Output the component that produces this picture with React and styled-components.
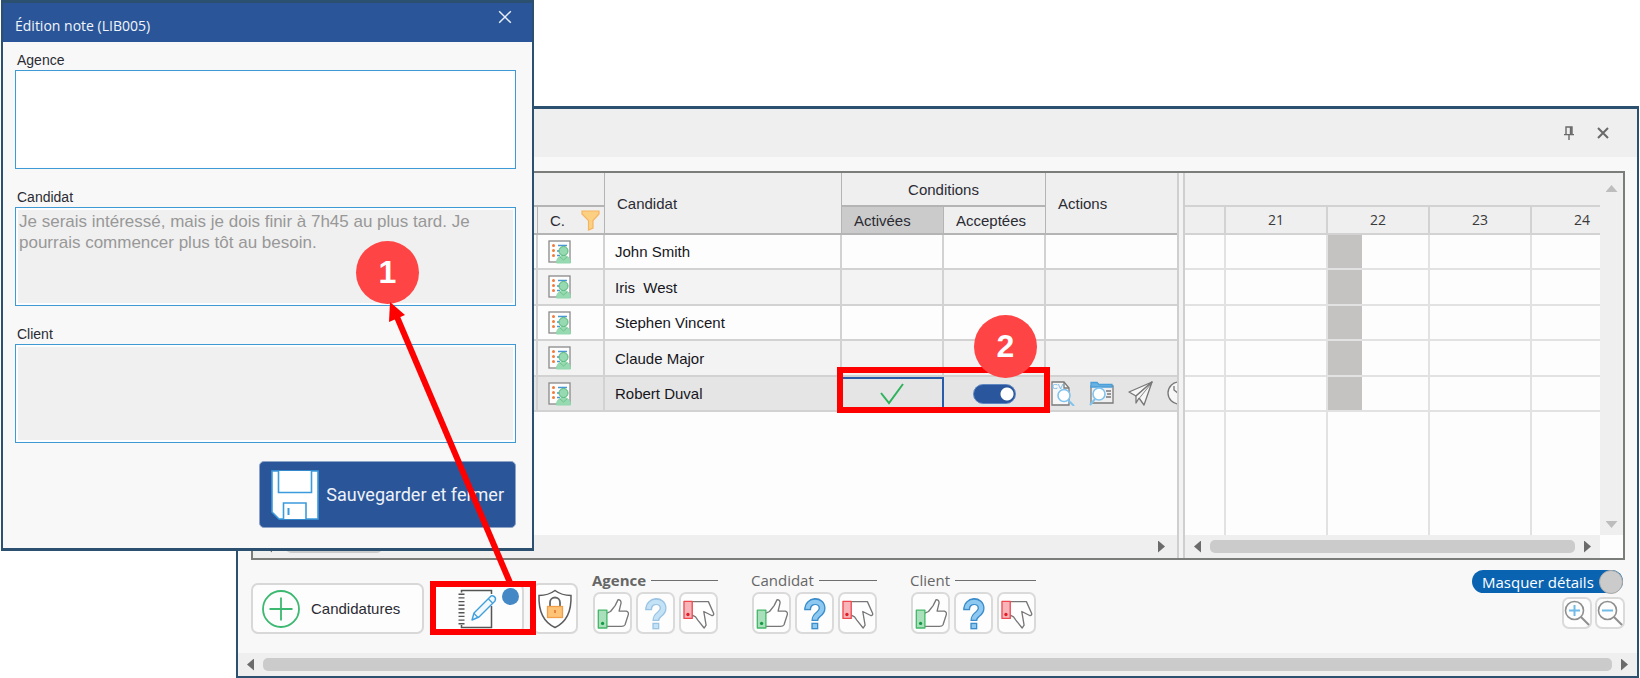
import React, { useState } from 'react';
import styled, { createGlobalStyle } from 'styled-components';

const GlobalStyle = createGlobalStyle`
  * {
    box-sizing: border-box;
  }

  body {
    margin: 0;
    background: #ffffff;
    font-family: 'Liberation Sans', Arial, sans-serif;
    color: #2b2b33;
  }

  button, input, textarea {
    font-family: inherit;
  }
`;

const candidates = [
  { name: 'John Smith' },
  { name: 'Iris  West' },
  { name: 'Stephen Vincent' },
  { name: 'Claude Major' },
  { name: 'Robert Duval', selected: true },
];

const hours = ['21', '22', '23', '24'];

const groups = [
  { title: 'Agence', active: true, faded: true },
  { title: 'Candidat' },
  { title: 'Client' },
];

/* ---------- icons ---------- */

const CrossIcon = ({ size, color, width }) => (
  <svg width={size} height={size} viewBox="0 0 12 12" fill="none" stroke={color} strokeWidth={width}>
    <path d="M1 1l10 10M11 1L1 11" />
  </svg>
);

const PinIcon = () => (
  <svg width="12" height="14" viewBox="0 0 12 14" fill="none" stroke="#6a6a6a" strokeWidth="1.4">
    <path d="M3 8V1h6v7M1 8.6h10M6 8.6V14" />
    <path d="M7.8 1v7" strokeWidth="2" />
  </svg>
);

const FloppyIcon = () => (
  <svg width="48" height="50" viewBox="0 0 48 50" fill="#fff" stroke="#3b9bdc" strokeWidth="1.6">
    <path d="M1 1h46v48H8l-7-7z" />
    <path d="M7.5 1v21.5h33V1" />
    <path d="M12.5 49V33H35v16" />
    <path d="M17.5 38v7" strokeWidth="2" />
  </svg>
);

const FunnelIcon = () => (
  <svg width="19" height="21" viewBox="0 0 19 21">
    <path d="M1 1h17v3l-6 6.500V18l-4.500 2V10.500L1 4z" fill="#fbd083" stroke="#f6b45f" strokeWidth="1.2" />
  </svg>
);

const ProfileIcon = () => (
  <svg width="24" height="24" viewBox="0 0 24 24" fill="none">
    <rect x="1" y="1" width="21" height="21" fill="#fdfdfd" stroke="#8a8a8a" strokeWidth="1.3" />
    <g fill="#ee7d3c">
      <circle cx="5.500" cy="5.500" r="1.500" />
      <circle cx="5.500" cy="10.500" r="1.500" />
      <circle cx="5.500" cy="15.500" r="1.500" />
    </g>
    <path d="M10 5.500h9M9 11h3M9 15.500h3" stroke="#4797d3" strokeWidth="1.6" />
    <path d="M8.500 23c0-5 3-7.500 7-7.500s7 2.500 7 7.500z" fill="#97dab1" stroke="#8fd7ab" />
    <circle cx="15.500" cy="11" r="4.500" fill="#97dab1" stroke="#54b779" />
    <path d="M12 17l3.500 3 3.500-3" stroke="#6cc38c" />
  </svg>
);

const CheckIcon = () => (
  <svg width="24" height="22" viewBox="0 0 24 22" fill="none" stroke="#2fb35c" strokeWidth="2">
    <path d="M1 10l8 10L23 1" />
  </svg>
);

const CvIcon = () => (
  <svg width="24" height="25" viewBox="0 0 24 25" fill="none" stroke="#7a7a7a" strokeWidth="1.3">
    <path d="M1 1h12l5 6v17H1z" fill="#f7f7f7" />
    <path d="M13 1v6h5" />
    <text x="1" y="8" fontSize="8" fill="#5fb0e4" stroke="none">CV</text>
    <circle cx="13" cy="14.500" r="6" fill="#fff" stroke="#7fc3ee" strokeWidth="1.600" />
    <path d="M17 19l6 6" stroke="#7fc3ee" strokeWidth="2" />
  </svg>
);

const FolderIcon = () => (
  <svg width="25" height="25" viewBox="0 0 25 25" fill="none" stroke="#7a7a7a" strokeWidth="1.3">
    <path d="M2 5h22v17H2z" fill="#efefef" />
    <path d="M2 5V1.500h6l2 2h13V6H2z" fill="#69b2e2" stroke="#4b9fd8" />
    <path d="M17 10h5M18 13h4M17 16h5" />
    <circle cx="10" cy="13" r="6" fill="#fff" stroke="#7fc3ee" strokeWidth="1.600" />
    <path d="M6 18l-5 6" stroke="#7fc3ee" strokeWidth="2" />
  </svg>
);

const PlaneIcon = () => (
  <svg width="25" height="25" viewBox="0 0 25 25" fill="#f7f7f7" stroke="#777" strokeWidth="1.300" strokeLinejoin="round">
    <path d="M24 1L1 11l7 4z" />
    <path d="M24 1L11 17l5 7z" />
    <path d="M24 1L8 15v7l3-5" />
  </svg>
);

const ClockIcon = () => (
  <svg width="24" height="24" viewBox="0 0 24 24" fill="#f7f7f7" stroke="#777" strokeWidth="1.300">
    <circle cx="12" cy="12" r="11" />
    <path d="M7 5v4l5 4" />
  </svg>
);

const PlusCircleIcon = () => (
  <svg width="38" height="38" viewBox="0 0 38 38" fill="none" stroke="#3cb871" strokeWidth="1.800">
    <circle cx="19" cy="19" r="18" />
    <path d="M19 7.500v23M7.500 19h23" />
  </svg>
);

const NotebookIcon = () => (
  <svg width="40" height="40" viewBox="0 0 40 40" fill="none">
    <path d="M3.500 3.500V1.500h30V5M33.500 17v21.500h-30V36" stroke="#555" strokeWidth="1.500" />
    <path d="M3.500 4.500v31" stroke="#555" strokeWidth="6" strokeDasharray="1.400 2.300" />
    <path d="M14 31l2-7L32 8c2-3 7 0 5 4L21 28z" fill="#f2f9fe" stroke="#3f9fdc" strokeWidth="1.400" strokeLinejoin="round" />
    <path d="M16 24.500l4 4M30.500 10l4 4" stroke="#3f9fdc" strokeWidth="1.200" />
  </svg>
);

const ShieldIcon = () => (
  <svg width="36" height="40" viewBox="0 0 36 40" fill="none">
    <path d="M18 1.500c4 3 10 5 16 5 .500 14-3 26-16 32C5 32.500 1.500 20.500 2 6.500c6 0 12-2 16-5z" fill="#fff" stroke="#5c5c5c" strokeWidth="1.500" />
    <path d="M13 18v-4.500a5 5 0 0 1 10 0V18" stroke="#666" strokeWidth="1.800" />
    <rect x="10.500" y="17.500" width="15" height="11" fill="#fdc478" stroke="#f0a04b" strokeWidth="1.300" />
    <path d="M18 21v3" stroke="#e5732c" strokeWidth="1.600" />
  </svg>
);

const ThumbUpIcon = () => (
  <svg width="33" height="33" viewBox="0 0 100 100" strokeWidth="4" strokeLinejoin="round">
    <path d="M33 49L44 44L58 26L67 8Q76 8 76 18L70 43H92Q101 46 97 56L88 84Q85 89 77 89H33" fill="#fff" stroke="#777" />
    <rect x="7" y="40" width="26" height="54" fill="#a9dfba" stroke="#42b768" />
    <circle cx="20" cy="80" r="5" fill="#149a44" />
  </svg>
);

const ThumbDownIcon = () => (
  <svg width="33" height="33" viewBox="0 0 100 100" strokeWidth="4" strokeLinejoin="round">
    <path d="M31 14H80L96 50Q97 57 90 56L66 44L73 85L67 94L48 70L41 60L31 55" fill="#fff" stroke="#777" />
    <rect x="6" y="13" width="25" height="52" fill="#f8b4b8" stroke="#ec4950" />
    <circle cx="18" cy="53" r="5" fill="#e01f28" />
  </svg>
);

const QuestionIcon = ({ faded }) => (
  <svg width="33" height="33" viewBox="0 0 100 100" fill="none" opacity={faded ? 0.5 : 1}>
    <g stroke="#3a8ccb" strokeWidth="21">
      <path d="M29 40C29 6 73 6 73 34C73 54 51 50 51 73" />
      <path d="M51 78v20" />
    </g>
    <g stroke="#8cc8f0" strokeWidth="13">
      <path d="M29 36C31 8 73 8 73 34C73 54 51 50 51 69" />
      <path d="M51 82v12" />
    </g>
  </svg>
);

const ZoomIcon = ({ minus }) => (
  <svg width="26" height="26" viewBox="0 0 26 26" fill="none">
    <circle cx="10.500" cy="10.500" r="9" stroke="#8f8f8f" strokeWidth="1.600" />
    <path d="M17 17l8 8" stroke="#8f8f8f" strokeWidth="2" />
    <path d={minus ? 'M5 10.500h11' : 'M5 10.500h11M10.500 5v11'} stroke="#72bbe8" strokeWidth="2" />
  </svg>
);

/* ---------- component ---------- */

export default function App() {
  const [accepted, setAccepted] = useState(true);
  const [hideDetails, setHideDetails] = useState(true);
  const [note, setNote] = useState('');

  return (
    <Desktop>
      <GlobalStyle />
      <MainWindow>
        <MainTitleBar>
          <PlainButton aria-label="Épingler"><PinIcon /></PlainButton>
          <PlainButton aria-label="Fermer la fenêtre"><CrossIcon size={12} color="#6a6a6a" width={2} /></PlainButton>
        </MainTitleBar>

        <MainBody>
          <Split>
            <GridPane>
              <GridArea>
                <Grid>
                  <colgroup>
                    <Col $width="285px" />
                    <Col $width="67px" />
                    <Col $width="237px" />
                    <Col $width="102px" />
                    <Col $width="102px" />
                    <Col $width="auto" />
                  </colgroup>
                  <thead>
                    <tr>
                      <HeadCell colSpan={2} $tall />
                      <HeadCell rowSpan={2}>Candidat</HeadCell>
                      <HeadCell colSpan={2} $tall $center>Conditions</HeadCell>
                      <HeadCell rowSpan={2} $last>Actions</HeadCell>
                    </tr>
                    <tr>
                      <HeadCell />
                      <HeadCell>
                        <FilterHead>C. <FunnelIcon /></FilterHead>
                      </HeadCell>
                      <HeadCell $active>Activées</HeadCell>
                      <HeadCell>Acceptées</HeadCell>
                    </tr>
                  </thead>
                  <tbody>
                    {candidates.map((c) => (
                      <GridRow key={c.name} $selected={c.selected}>
                        <Cell />
                        <Cell><ProfileIcon /></Cell>
                        <Cell>{c.name}</Cell>
                        <Cell $focused={c.selected} $center>{c.selected && <CheckIcon />}</Cell>
                        <Cell $center>
                          {c.selected && (
                            <Switch
                              type="checkbox"
                              aria-label="Condition acceptée"
                              checked={accepted}
                              onChange={(e) => setAccepted(e.target.checked)}
                            />
                          )}
                        </Cell>
                        <Cell $last>
                          {c.selected && (
                            <RowActions>
                              <PlainButton aria-label="Voir le CV"><CvIcon /></PlainButton>
                              <PlainButton aria-label="Voir le dossier"><FolderIcon /></PlainButton>
                              <PlainButton aria-label="Envoyer"><PlaneIcon /></PlainButton>
                              <PlainButton aria-label="Historique"><ClockIcon /></PlainButton>
                            </RowActions>
                          )}
                        </Cell>
                      </GridRow>
                    ))}
                  </tbody>
                </Grid>
              </GridArea>
              <ScrollBar $wide>
                <Arrow $dir="left" />
                <Track><Thumb $width="96px" /></Track>
                <Arrow $dir="right" />
              </ScrollBar>
            </GridPane>

            <Splitter />

            <TimelinePane>
              <TimelineArea>
                <Timeline>
                  <colgroup>
                    <Col $width="41px" />
                    {hours.map((h) => <Col key={h} $width="102px" />)}
                  </colgroup>
                  <thead>
                    <tr><TimeHead colSpan={5} $tall /></tr>
                    <tr>
                      <TimeHead />
                      {hours.map((h) => <TimeHead key={h}>{h}</TimeHead>)}
                    </tr>
                  </thead>
                  <tbody>
                    {candidates.map((c) => (
                      <TimeRow key={c.name}>
                        <TimeCell />
                        {hours.map((h) => <TimeCell key={h} $busy={h === '22'} />)}
                      </TimeRow>
                    ))}
                    <tr>
                      <TimeCell $open />
                      {hours.map((h) => <TimeCell key={h} $open />)}
                    </tr>
                  </tbody>
                </Timeline>
                <VerticalBar>
                  <Arrow $dir="up" />
                  <Arrow $dir="down" />
                </VerticalBar>
              </TimelineArea>
              <TimelineFoot>
                <ScrollBar>
                  <Arrow $dir="left" />
                  <Track><Thumb $width="100%" /></Track>
                  <Arrow $dir="right" />
                </ScrollBar>
              </TimelineFoot>
            </TimelinePane>
          </Split>

          <Toolbar>
            <ToolButton $width="173px"><PlusCircleIcon />Candidatures</ToolButton>
            <ToolButton $width="92px" $center aria-label="Notes">
              <NotebookIcon />
              <Dot />
            </ToolButton>
            <ToolButton $width="46px" $center aria-label="Protection"><ShieldIcon /></ToolButton>
            <Groups>
              {groups.map((g) => (
                <Group key={g.title}>
                  <GroupTitle $active={g.active}>{g.title}</GroupTitle>
                  <GroupButtons>
                    <IconButton aria-label={`${g.title} oui`}><ThumbUpIcon /></IconButton>
                    <IconButton aria-label={`${g.title} peut-être`}><QuestionIcon faded={g.faded} /></IconButton>
                    <IconButton aria-label={`${g.title} non`}><ThumbDownIcon /></IconButton>
                  </GroupButtons>
                </Group>
              ))}
            </Groups>
            <SideTools>
              <DetailsToggle>
                Masquer détails
                <input
                  type="checkbox"
                  checked={hideDetails}
                  onChange={(e) => setHideDetails(e.target.checked)}
                />
              </DetailsToggle>
              <ZoomButtons>
                <ZoomButton aria-label="Agrandir"><ZoomIcon /></ZoomButton>
                <ZoomButton aria-label="Réduire"><ZoomIcon minus /></ZoomButton>
              </ZoomButtons>
            </SideTools>
          </Toolbar>
        </MainBody>

        <ScrollBar>
          <Arrow $dir="left" />
          <Track><Thumb $width="100%" /></Track>
          <Arrow $dir="right" />
        </ScrollBar>
      </MainWindow>

      <Dialog>
        <DialogHeader>
          <DialogTitle>Édition note (LIB005)</DialogTitle>
          <PlainButton aria-label="Fermer"><CrossIcon size={14} color="#e8eef7" width={1.3} /></PlainButton>
        </DialogHeader>
        <DialogBody>
          <Field>
            <label htmlFor="agence">Agence</label>
            <NoteArea id="agence" value={note} onChange={(e) => setNote(e.target.value)} />
          </Field>
          <Field>
            <label htmlFor="candidat">Candidat</label>
            <NoteArea
              id="candidat"
              readOnly
              value="Je serais intéressé, mais je dois finir à 7h45 au plus tard. Je pourrais commencer plus tôt au besoin."
            />
          </Field>
          <Field>
            <label htmlFor="client">Client</label>
            <NoteArea id="client" readOnly value="" />
          </Field>
          <SaveButton>
            <FloppyIcon />
            Sauvegarder et fermer
          </SaveButton>
        </DialogBody>
      </Dialog>

      <Highlight $x={837} $y={367} $w={213} $h={46} />
      <Highlight $x={430} $y={581} $w={106} $h={54} />
      <Marker $x={356} $y={241}>1</Marker>
      <Marker $x={974} $y={315}>2</Marker>
      <Pointer width="140" height="300" viewBox="0 0 140 300">
        <path d="M17 17L131 285" stroke="#fe0000" strokeWidth="6" />
        <path d="M10 2L9 22L25 15z" fill="#fe0000" />
      </Pointer>
    </Desktop>
  );
}

/* ---------- windows ---------- */

const Desktop = styled.div`
  position: relative;
  display: flex;
  min-height: 100vh;
  padding: 106px 1px 0 236px;
`;

const MainWindow = styled.section`
  flex: 1;
  min-width: 0;
  display: flex;
  flex-direction: column;
  border: 2px solid #2c5070;
  border-top-width: 3px;
  background: #f8f8f8;
`;

const MainTitleBar = styled.header`
  display: flex;
  justify-content: flex-end;
  align-items: center;
  gap: 22px;
  height: 48px;
  padding-right: 28px;
  background: #efefef;
`;

const PlainButton = styled.button`
  display: flex;
  padding: 0;
  border: none;
  background: none;
  cursor: pointer;
`;

const MainBody = styled.div`
  flex: 1;
  display: flex;
  flex-direction: column;
  padding: 14px 12px 0 13px;
`;

const Split = styled.div`
  flex: 1;
  display: flex;
  border: 2px solid #7b7d7b;
  background: #efefef;
`;

const GridPane = styled.div`
  flex: 1;
  min-width: 0;
  display: flex;
  flex-direction: column;
`;

const GridArea = styled.div`
  flex: 1;
  overflow: hidden;
  background: #fdfdfd;
`;

const Splitter = styled.div`
  width: 8px;
  border: solid #cfcfcf;
  border-width: 0 2px;
  background: #f3f3f3;
`;

const Col = styled.col`
  width: ${({ $width }) => $width};
`;

/* ---------- candidate grid ---------- */

const Grid = styled.table`
  width: 100%;
  table-layout: fixed;
  border-spacing: 0;
  font-size: 15px;
`;

const HeadCell = styled.th`
  height: ${({ $tall }) => ($tall ? '34px' : '28px')};
  padding: 0 12px;
  border: solid #b4b4b4;
  border-width: 0 ${({ $last }) => ($last ? '0' : '1px')} 2px 0;
  background: ${({ $active }) => ($active ? '#cbcbcb' : '#efefef')};
  font-weight: 400;
  text-align: ${({ $center }) => ($center ? 'center' : 'left')};
`;

const FilterHead = styled.div`
  display: flex;
  align-items: center;
  justify-content: space-between;
  margin-right: -8px;
`;

const Cell = styled.td`
  padding: 0 ${({ $center }) => ($center ? '0' : '10px')};
  border: solid #d2d2d2;
  border-width: 0 ${({ $last }) => ($last ? '0' : '2px')} 2px 0;
  color: #16161c;
  text-align: ${({ $center }) => ($center ? 'center' : 'left')};
  white-space: pre;
  overflow: hidden;
  ${({ $focused }) => $focused && `
    border-color: #2a5caa;
    box-shadow: inset 0 2px 0 #2a5caa;
  `}

  svg {
    display: block;
    margin: ${({ $center }) => ($center ? '0 auto' : '0')};
  }
`;

const GridRow = styled.tr`
  height: 35px;
  background: ${({ $selected }) => ($selected ? '#e5e5e5' : '#fdfdfd')};

  &:nth-child(even) {
    height: 36px;
    background: #f3f3f3;
  }
`;

const RowActions = styled.div`
  display: flex;
  gap: 14px;
  margin-left: -5px;
`;

const Switch = styled.input`
  appearance: none;
  display: block;
  width: 43px;
  height: 20px;
  margin: 0 auto;
  border: 1px solid #5e86c0;
  border-radius: 10px;
  background: radial-gradient(circle at ${({ checked }) => (checked ? '33px' : '9px')} 9px, #fff 6px, #29569c 7px);
  cursor: pointer;
`;

/* ---------- timeline ---------- */

const TimelinePane = styled.div`
  width: 438px;
  display: flex;
  flex-direction: column;
`;

const TimelineArea = styled.div`
  flex: 1;
  display: flex;
  overflow: hidden;
  position: relative;
`;

const Timeline = styled.table`
  width: 449px;
  flex: none;
  table-layout: fixed;
  border-spacing: 0;
  background: #fdfdfd;
  font: 14px 'Open Sans', sans-serif;
  color: #3a3a3a;
`;

const TimeHead = styled.th`
  height: ${({ $tall }) => ($tall ? '34px' : '28px')};
  padding: 0;
  border: solid #d2d2d2;
  border-width: 0 2px 2px 0;
  background: #efefef;
  font-weight: 500;
  line-height: 20px;
`;

const TimeRow = styled.tr`
  height: 35px;

  &:nth-child(even) {
    height: 36px;
  }
`;

const TimeCell = styled.td`
  padding: 0;
  border: solid #e2e2e2;
  border-width: 0 2px ${({ $open }) => ($open ? '0' : '2px')} 0;
  ${({ $busy }) => $busy && 'background: linear-gradient(to right, #c5c3c1 34px, transparent 34px) padding-box;'}
`;

const VerticalBar = styled.div`
  position: absolute;
  top: 0;
  right: 0;
  bottom: 0;
  width: 23px;
  display: flex;
  flex-direction: column;
  align-items: center;
  justify-content: space-between;
  padding: 12px 0 7px;
  background: #efefef;
`;

const TimelineFoot = styled.div`
  padding-right: 23px;
  background: #fdfdfd;
`;

/* ---------- scroll bars ---------- */

const ScrollBar = styled.div`
  display: flex;
  align-items: center;
  gap: ${({ $wide }) => ($wide ? '14px' : '9px')};
  height: 23px;
  padding: 0 ${({ $wide }) => ($wide ? '12px' : '9px')};
  background: #efefef;
`;

const Track = styled.div`
  flex: 1;
`;

const Thumb = styled.div`
  width: ${({ $width }) => $width};
  height: 13px;
  border-radius: 5px;
  background: #cbcbcb;
`;

const arrowShapes = {
  left: 'polygon(100% 0, 100% 100%, 0 50%)',
  right: 'polygon(0 0, 100% 50%, 0 100%)',
  up: 'polygon(50% 0, 100% 100%, 0 100%)',
  down: 'polygon(0 0, 100% 0, 50% 100%)',
};

const isVertical = (dir) => dir === 'up' || dir === 'down';

const Arrow = styled.span`
  width: ${({ $dir }) => (isVertical($dir) ? '12px' : '7px')};
  height: ${({ $dir }) => (isVertical($dir) ? '7px' : '12px')};
  background: ${({ $dir }) => (isVertical($dir) ? '#bdbdbd' : '#6b6b6b')};
  clip-path: ${({ $dir }) => arrowShapes[$dir]};
`;

/* ---------- toolbar ---------- */

const Toolbar = styled.div`
  display: flex;
  align-items: flex-end;
  gap: 8px;
  padding: 10px 0 19px;
`;

const ToolButton = styled.button`
  position: relative;
  display: flex;
  align-items: center;
  justify-content: ${({ $center }) => ($center ? 'center' : 'flex-start')};
  gap: 11px;
  width: ${({ $width }) => $width};
  height: 51px;
  padding: 0 ${({ $center }) => ($center ? '0' : '9px')};
  border: 2px solid #d8d8d8;
  border-radius: 7px;
  background: #fdfdfd;
  color: #2b2b33;
  font-size: 15px;
  cursor: pointer;
`;

const Dot = styled.span`
  position: absolute;
  top: 3px;
  right: 3px;
  width: 17px;
  height: 17px;
  border-radius: 50%;
  background: #4489c5;
`;

const Groups = styled.div`
  display: flex;
  gap: 33px;
  margin-left: 6px;
`;

const Group = styled.div`
  width: 126px;
`;

const GroupTitle = styled.div`
  display: flex;
  align-items: center;
  gap: 5px;
  margin-bottom: 2px;
  font-family: 'Open Sans', sans-serif;
  font-size: 15px;
  font-weight: ${({ $active }) => ($active ? 700 : 400)};
  line-height: 20px;
  color: #666;

  &::after {
    content: '';
    flex: 1;
    height: 1px;
    background: #6e6e6e;
  }
`;

const GroupButtons = styled.div`
  display: flex;
  justify-content: flex-end;
  gap: 4px;
`;

const IconButton = styled.button`
  display: flex;
  align-items: center;
  justify-content: center;
  width: 39px;
  height: 42px;
  padding: 0;
  border: 2px solid #dadada;
  border-radius: 7px;
  background: #fdfdfd;
  cursor: pointer;
`;

const SideTools = styled.div`
  align-self: flex-start;
  display: flex;
  flex-direction: column;
  align-items: flex-end;
  gap: 4px;
  margin-left: auto;
`;

const DetailsToggle = styled.label`
  display: flex;
  align-items: center;
  justify-content: space-between;
  width: 151px;
  height: 23px;
  margin-right: 2px;
  padding-left: 10px;
  border-radius: 12px;
  background: #0a63b1;
  color: #fff;
  font-family: 'Open Sans', sans-serif;
  font-size: 15px;
  cursor: pointer;

  input {
    appearance: none;
    width: 24px;
    height: 24px;
    margin: 0;
    border: 1px solid #a8a8a8;
    border-radius: 50%;
    background: #cbcbcb;
  }
`;

const ZoomButtons = styled.div`
  display: flex;
  gap: 3px;
`;

const ZoomButton = styled(IconButton)`
  width: 30px;
  height: 32px;
`;

/* ---------- note dialog ---------- */

const Dialog = styled.section`
  position: absolute;
  top: 0;
  left: 1px;
  width: 533px;
  border: 2px solid #2c5070;
  border-width: 3px 2px;
  background: #f8f8f8;
`;

const DialogHeader = styled.header`
  display: flex;
  justify-content: space-between;
  align-items: flex-start;
  height: 39px;
  padding: 7px 20px 0 12px;
  background: #2a5699;
`;

const DialogTitle = styled.h1`
  margin: 6px 0 0;
  font: 14px/20px 'Open Sans', sans-serif;
  color: #f2f5fa;
`;

const DialogBody = styled.div`
  display: flex;
  flex-direction: column;
  gap: 18px;
  padding: 8px 16px 20px 12px;
`;

const Field = styled.div`
  display: flex;
  flex-direction: column;

  label {
    padding-left: 2px;
    font-size: 14px;
    line-height: 20px;
  }
`;

const NoteArea = styled.textarea`
  height: 99px;
  padding: 3px;
  border: 1px solid #3f99d4;
  outline: none;
  resize: none;
  box-shadow: inset 0 0 0 2px #fbfdfe;
  background: ${({ readOnly }) => (readOnly ? '#f0f0f0' : '#ffffff')};
  color: #989898;
  font-size: 17px;
  line-height: 21px;
`;

const SaveButton = styled.button`
  align-self: flex-end;
  display: flex;
  align-items: center;
  gap: 7px;
  height: 67px;
  padding: 0 11px;
  border: 1px solid #8ea3c6;
  border-radius: 5px;
  background: #2a5699;
  color: #eef2f8;
  font-family: Roboto, sans-serif;
  font-size: 18px;
  cursor: pointer;
`;

/* ---------- callouts over the windows ---------- */

const Highlight = styled.div`
  position: absolute;
  left: ${({ $x }) => $x}px;
  top: ${({ $y }) => $y}px;
  width: ${({ $w }) => $w}px;
  height: ${({ $h }) => $h}px;
  border: 6px solid #fe0000;
  pointer-events: none;
`;

const Marker = styled.div`
  position: absolute;
  left: ${({ $x }) => $x}px;
  top: ${({ $y }) => $y}px;
  display: flex;
  align-items: center;
  justify-content: center;
  width: 63px;
  height: 63px;
  border-radius: 50%;
  background: #fe4444;
  color: #fff;
  font-size: 32px;
  font-weight: 700;
`;

const Pointer = styled.svg`
  position: absolute;
  left: 380px;
  top: 300px;
  pointer-events: none;
`;
